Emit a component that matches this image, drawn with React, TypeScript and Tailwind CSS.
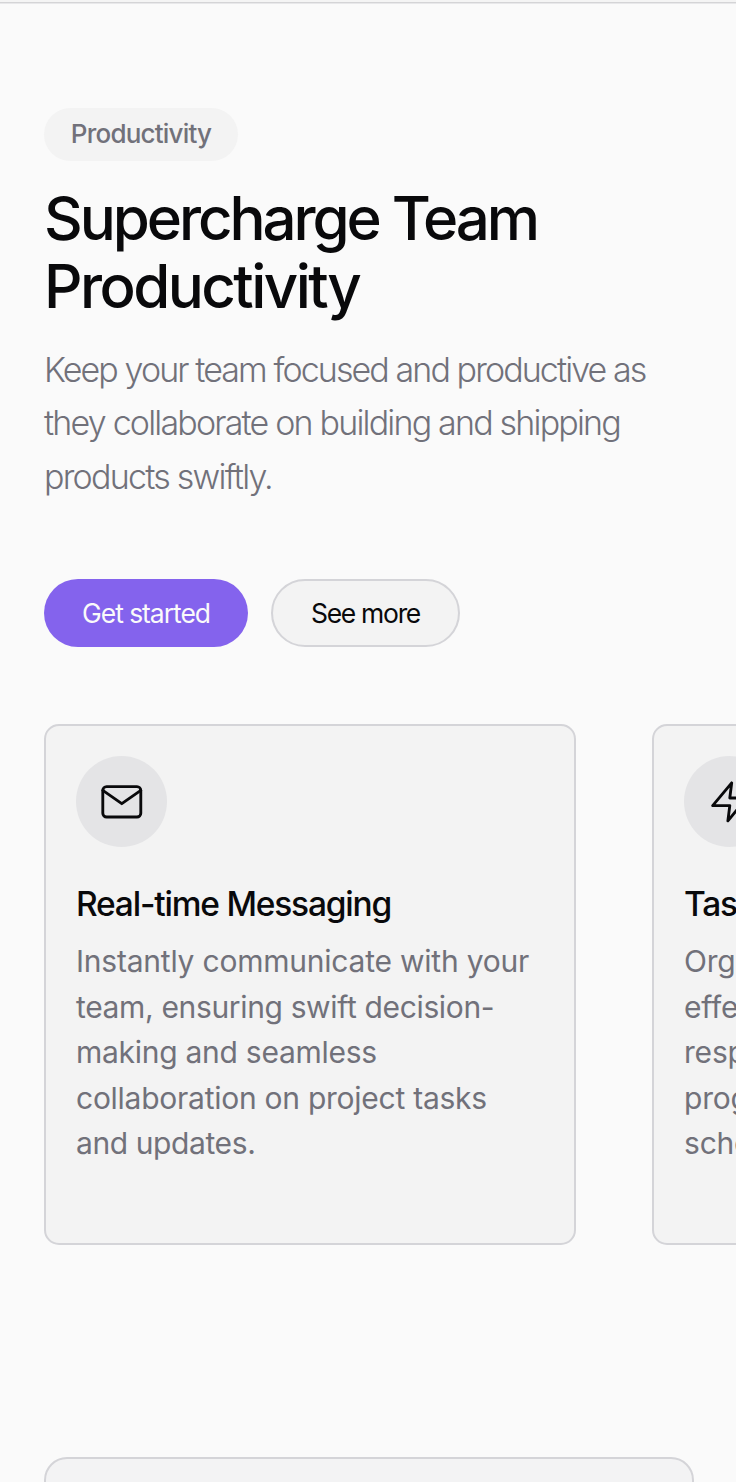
import React from 'react';

type Line = { text: string; className: string };

const intro: Line[] = [
  { text: 'Keep your team focused and productive as', className: 'tracking-[-1.91px]' },
  { text: 'they collaborate on building and shipping', className: 'tracking-[-1.81px]' },
  { text: 'products swiftly.', className: 'tracking-[-1.77px]' },
];

const messaging: Line[] = [
  { text: 'Instantly communicate with your', className: 'tracking-[-0.22px]' },
  { text: 'team, ensuring swift decision-', className: 'tracking-[-0.35px]' },
  { text: 'making and seamless', className: 'tracking-[-0.27px]' },
  { text: 'collaboration on project tasks', className: 'tracking-[-0.26px]' },
  { text: 'and updates.', className: 'tracking-[-0.4px]' },
];

const tasks: Line[] = [
  { text: 'Organize tasks', className: 'tracking-[-0.2px]' },
  { text: 'effectively, assign', className: 'tracking-[-0.2px]' },
  { text: 'responsibilities, track', className: 'tracking-[-0.2px]' },
  { text: 'progress, and keep', className: 'tracking-[-0.2px]' },
  { text: 'schedules on time.', className: 'tracking-[-0.2px]' },
];

function Lines({ lines }: { lines: Line[] }) {
  return (
    <>
      {lines.map((line) => (
        <span key={line.text} className={`block whitespace-nowrap ${line.className}`}>
          {line.text}
        </span>
      ))}
    </>
  );
}

function FeatureCard({ icon, title, lines }: { icon: React.ReactNode; title: string; lines: Line[] }) {
  return (
    <article className="h-[521px] w-[532px] shrink-0 rounded-[15px] border-2 border-[#d4d4d8] bg-[#f3f3f3] px-[30px] pt-[30px]">
      <div className="flex size-[91px] items-center justify-center rounded-full bg-[#e4e4e6]">
        <svg
          className="size-[45.6px]"
          viewBox="0 0 24 24"
          fill="none"
          stroke="#09090b"
          strokeWidth="1.5"
          strokeLinecap="round"
          strokeLinejoin="round"
        >
          {icon}
        </svg>
      </div>
      <h3 className="mt-[31px] whitespace-nowrap text-[33.5px] leading-[53px] font-medium tracking-[-1.2px] text-[#09090b]">
        {title}
      </h3>
      <p className="mt-[8px] text-[30px] leading-[45.5px] text-[#71717a]">
        <Lines lines={lines} />
      </p>
    </article>
  );
}

export default function App() {
  return (
    <main className="h-[1482px] w-full overflow-hidden bg-[#fafafa] font-['Inter','Liberation_Sans',sans-serif]">
      <div className="h-[4px] border-t-2 border-b border-t-[#f4f4f4] border-b-[#e8e8ea] bg-[#d4d4d6]" />
      <section className="flex flex-col items-start pt-[104px] pl-[44px]">
        <div className="flex h-[53px] w-[194px] items-center justify-center rounded-full bg-[#f3f3f3] pb-[2px] text-[26px] font-medium tracking-[-0.8px] text-[#71717a]">
          Productivity
        </div>
        <h2 className="mt-[23px] text-[60px] leading-[68px] font-medium text-[#09090b]">
          <span className="block whitespace-nowrap tracking-[-3.07px]">Supercharge Team</span>
          <span className="block whitespace-nowrap tracking-[-2.55px]">Productivity</span>
        </h2>
        <p className="mt-[23px] text-[34px] leading-[53.4px] font-light text-[#71717a]">
          <Lines lines={intro} />
        </p>
        <div className="mt-[75.8px] flex gap-[23px]">
          <button className="h-[68px] w-[204px] rounded-full bg-[#8463ed] pt-[2px] text-[26.5px] tracking-[-1.05px] text-[#fafafa]">
            Get started
          </button>
          <button className="h-[68px] w-[189px] rounded-full border-2 border-[#d4d4d8] bg-[#f3f3f3] pt-[2px] text-[26.5px] tracking-[-1.3px] text-[#09090b]">
            See more
          </button>
        </div>
        <div className="mt-[77px] flex gap-[76px]">
          <FeatureCard
            title="Real-time Messaging"
            lines={messaging}
            icon={
              <>
                <rect x="2" y="4" width="20" height="16" rx="2" />
                <path d="m22 6-10 7L2 6" />
              </>
            }
          />
          <FeatureCard
            title="Task Management"
            lines={tasks}
            icon={<path d="M13 2 3 14h9l-1 8 10-12h-9l1-8z" />}
          />
        </div>
        <div className="mt-[212px] h-[200px] w-[650px] rounded-[23px] border-2 border-[#d4d4d8] bg-[#f3f3f4]" />
      </section>
    </main>
  );
}
